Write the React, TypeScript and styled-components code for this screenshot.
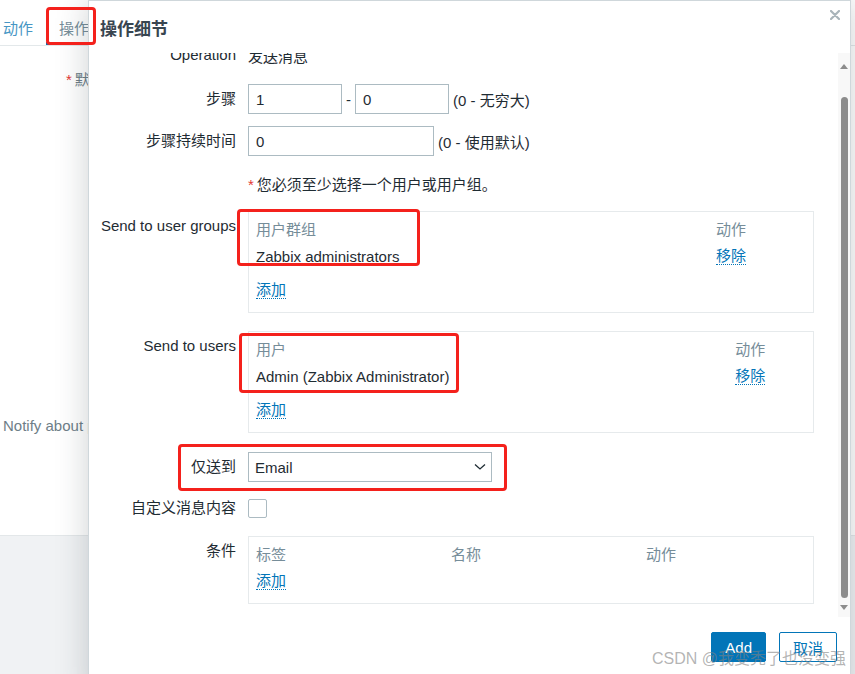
import React, { useLayoutEffect, useRef } from "react";
import styled, { createGlobalStyle } from "styled-components";

const colors = {
  text: "#1f2c33",
  muted: "#768d99",
  link: "#0275b8",
  inputBorder: "#acbbc2",
  boxBorder: "#e6eaec",
  required: "#e33734",
  annotate: "#f4211c",
};

const font = `"Liberation Sans", Arial, "Noto Sans CJK SC", sans-serif`;

const GlobalStyle = createGlobalStyle`
  html, body {
    margin: 0;
    padding: 0;
    background: #ffffff;
  }
  body {
    font-family: ${font};
    overflow: hidden;
  }
  * {
    box-sizing: border-box;
  }
`;

const Stage = styled.div`
  position: relative;
  width: 855px;
  height: 674px;
  overflow: hidden;
  background: #e9edef;
  font-family: ${font};
  font-size: 15px;
  color: ${colors.text};
`;

/* ---------- page behind the dialog ---------- */

const BackPage = styled.div`
  display: flex;
  flex-direction: column;
  height: 100%;
`;

const TabBar = styled.div`
  display: flex;
  height: 46px;
  margin-left: -10px;
  background: #ffffff;
  border-bottom: 1px solid #e3e8ea;
`;

const Tab = styled.div<{ $active?: boolean }>`
  display: flex;
  align-items: center;
  padding: 10px 13px 0;
  color: ${({ $active }) => ($active ? colors.muted : "#4796c4")};
  box-shadow: ${({ $active }) =>
    $active ? `inset 0 -3px 0 ${colors.link}` : "none"};
`;

const BackForm = styled.div`
  display: flex;
  flex-direction: column;
  height: 489px;
  background: #ffffff;
`;

const BackRow = styled.div<{ $mt: number; $indent: number }>`
  margin-top: ${({ $mt }) => $mt}px;
  padding-left: ${({ $indent }) => $indent}px;
  line-height: 30px;
  color: #6e7e88;
  white-space: nowrap;
`;

const Star = styled.span`
  color: ${colors.required};
  margin-right: 3px;
`;

const BackFooter = styled.div`
  flex: 1;
  background: #f0f2f4;
  border-top: 1px solid #e3e7e9;
`;

/* ---------- dialog ---------- */

const Dialog = styled.div`
  position: absolute;
  left: 88px;
  top: 0;
  width: 763px;
  height: 700px;
  display: flex;
  flex-direction: column;
  background: #ffffff;
  border: 1px solid #cfd7db;
  box-shadow: 0 0 30px rgba(31, 44, 51, 0.22);
`;

const DialogHeader = styled.div`
  display: flex;
  justify-content: space-between;
  align-items: center;
  height: 52px;
  padding: 0 10px 0 11px;
`;

const Title = styled.h4`
  margin: 0;
  font-size: 17px;
  font-weight: bold;
  color: #384550;
`;

const CloseButton = styled.button`
  align-self: flex-start;
  margin-top: 9px;
  padding: 0;
  width: 10px;
  height: 10px;
  border: none;
  background: none;
  display: flex;
`;

const DialogBody = styled.div`
  display: flex;
  height: 564px;
`;

const ScrollViewport = styled.div`
  flex: 1;
  overflow: hidden;
`;

const Scrollbar = styled.div`
  width: 12px;
  display: flex;
  flex-direction: column;
  align-items: center;
  background: #f8f8f8;
`;

const ArrowCell = styled.div<{ $h: number }>`
  height: ${({ $h }) => $h}px;
  display: flex;
  align-items: center;
  justify-content: center;
`;

const Arrow = styled.span<{ $down?: boolean }>`
  width: 0;
  height: 0;
  border-left: 4px solid transparent;
  border-right: 4px solid transparent;
  ${({ $down }) =>
    $down
      ? "border-top: 5px solid #8c8c8c;"
      : "border-bottom: 5px solid #8c8c8c;"}
`;

const ThumbTrack = styled.div`
  flex: 1;
  display: flex;
  padding-top: 18px;
`;

const Thumb = styled.div`
  width: 7px;
  border-radius: 4px;
  background: #8c8c8c;
`;

const Form = styled.div`
  display: flex;
  flex-direction: column;
  padding: 0 0 20px 11px;
`;

const Row = styled.div<{ $mt?: number }>`
  display: grid;
  grid-template-columns: 136px 566px;
  column-gap: 12px;
  margin-top: ${({ $mt }) => $mt ?? 0}px;
`;

const Label = styled.div`
  text-align: right;
  line-height: 30px;
  white-space: nowrap;
`;

const Field = styled.div`
  display: flex;
  align-items: center;
  gap: 4px;
  min-height: 30px;
  white-space: nowrap;
`;

const TextInput = styled.input<{ $w: number }>`
  width: ${({ $w }) => $w}px;
  height: 30px;
  padding: 0 7px;
  border: 1px solid ${colors.inputBorder};
  border-radius: 0;
  font-family: ${font};
  font-size: 15px;
  color: ${colors.text};
  outline: none;
`;

const Box = styled.div`
  border: 1px solid ${colors.boxBorder};
  padding: 4px 7px 10px;
`;

const Table = styled.table`
  width: 100%;
  border-collapse: collapse;
  th {
    height: 24px;
    padding: 0;
    text-align: left;
    font-weight: normal;
    color: ${colors.muted};
    white-space: nowrap;
  }
  td {
    height: 32px;
    padding: 0;
    white-space: nowrap;
  }
  th:first-child,
  td:first-child {
    padding-right: 10px;
  }
`;

const LinkButton = styled.a`
  display: inline-block;
  line-height: 17px;
  color: ${colors.link};
  text-decoration: none;
  border-bottom: 1px dotted ${colors.link};
  cursor: pointer;
`;

const AddRow = styled.div<{ $mt: number }>`
  display: flex;
  align-items: center;
  height: 24px;
  margin-top: ${({ $mt }) => $mt}px;
`;

const Select = styled.div`
  width: 244px;
  height: 30px;
  display: flex;
  align-items: center;
  justify-content: space-between;
  padding: 0 5px 0 6px;
  border: 1px solid ${colors.inputBorder};
`;

const Checkbox = styled.span`
  width: 19px;
  height: 19px;
  border: 1px solid ${colors.inputBorder};
  border-radius: 2px;
  background: #ffffff;
`;

const DialogFooter = styled.div`
  display: flex;
  justify-content: flex-end;
  gap: 13px;
  padding: 15px 13px 0 0;
`;

const Button = styled.button<{ $primary?: boolean }>`
  height: 30px;
  padding: 0 13px;
  border: 1px solid ${colors.link};
  border-radius: 2px;
  font-family: ${font};
  font-size: 15px;
  color: ${({ $primary }) => ($primary ? "#ffffff" : colors.link)};
  background: ${({ $primary }) => ($primary ? colors.link : "#ffffff")};
`;

/* ---------- overlays ---------- */

const Annotation = styled.div<{ $x: number; $y: number; $w: number; $h: number }>`
  position: absolute;
  left: ${({ $x }) => $x}px;
  top: ${({ $y }) => $y}px;
  width: ${({ $w }) => $w}px;
  height: ${({ $h }) => $h}px;
  border: 3px solid ${colors.annotate};
  border-radius: 4px;
  pointer-events: none;
`;

const Watermark = styled.div`
  position: absolute;
  left: 652px;
  top: 649px;
  font-size: 16px;
  line-height: 20px;
  color: rgba(130, 130, 130, 0.6);
  white-space: nowrap;
  pointer-events: none;
`;

const CloseIcon = () => (
  <svg width="10" height="10" viewBox="0 0 10 10">
    <path d="M1 1 L9 9 M9 1 L1 9" stroke="#a9b4ba" strokeWidth="2.2" strokeLinecap="round" />
  </svg>
);

const Chevron = () => (
  <svg width="12" height="8" viewBox="0 0 12 8">
    <path d="M1 1.5 L6 6 L11 1.5" fill="none" stroke={colors.text} strokeWidth="1.3" />
  </svg>
);

type Column = { title: string; width?: number };

const ListBox: React.FC<{ columns: Column[]; rows: string[][] }> = ({ columns, rows }) => (
  <Box>
    <Table>
      <thead>
        <tr>
          {columns.map((c) => (
            <th key={c.title} style={c.width ? { width: c.width } : undefined}>
              {c.title}
            </th>
          ))}
        </tr>
      </thead>
      {rows.length > 0 && (
        <tbody>
          {rows.map((r) => (
            <tr key={r[0]}>
              <td>{r[0]}</td>
              <td>
                <LinkButton>移除</LinkButton>
              </td>
            </tr>
          ))}
        </tbody>
      )}
    </Table>
    <AddRow $mt={rows.length > 0 ? 6 : 4}>
      <LinkButton>添加</LinkButton>
    </AddRow>
  </Box>
);

export default function App() {
  const scrollRef = useRef<HTMLDivElement>(null);

  useLayoutEffect(() => {
    if (scrollRef.current) scrollRef.current.scrollTop = 13;
  }, []);

  return (
    <Stage>
      <GlobalStyle />
      <BackPage>
        <TabBar>
          <Tab>动作</Tab>
          <Tab $active>操作</Tab>
        </TabBar>
        <BackForm>
          <BackRow $mt={19} $indent={66}>
            <Star>*</Star>默认操作步骤持续时间
          </BackRow>
          <BackRow $mt={316} $indent={3}>
            Notify about problems
          </BackRow>
        </BackForm>
        <BackFooter />
      </BackPage>

      <Dialog>
        <DialogHeader>
          <Title>操作细节</Title>
          <CloseButton aria-label="关闭">
            <CloseIcon />
          </CloseButton>
        </DialogHeader>

        <DialogBody>
          <ScrollViewport ref={scrollRef}>
            <Form>
              <Row>
                <Label>Operation</Label>
                <Field>发送消息</Field>
              </Row>
              <Row $mt={14}>
                <Label>步骤</Label>
                <Field>
                  <TextInput $w={94} defaultValue="1" />
                  <span>-</span>
                  <TextInput $w={94} defaultValue="0" />
                  <span>(0 - 无穷大)</span>
                </Field>
              </Row>
              <Row $mt={12}>
                <Label>步骤持续时间</Label>
                <Field>
                  <TextInput $w={186} defaultValue="0" />
                  <span>(0 - 使用默认)</span>
                </Field>
              </Row>
              <Row $mt={12}>
                <Label />
                <Field>
                  <span>
                    <Star>*</Star>您必须至少选择一个用户或用户组。
                  </span>
                </Field>
              </Row>
              <Row $mt={13}>
                <Label>Send to user groups</Label>
                <ListBox
                  columns={[{ title: "用户群组" }, { title: "动作" }]}
                  rows={[["Zabbix administrators"]]}
                />
              </Row>
              <Row $mt={18}>
                <Label>Send to users</Label>
                <ListBox
                  columns={[{ title: "用户" }, { title: "动作" }]}
                  rows={[["Admin (Zabbix Administrator)"]]}
                />
              </Row>
              <Row $mt={19}>
                <Label>仅送到</Label>
                <Field>
                  <Select>
                    <span>Email</span>
                    <Chevron />
                  </Select>
                </Field>
              </Row>
              <Row $mt={11}>
                <Label>自定义消息内容</Label>
                <Field>
                  <Checkbox />
                </Field>
              </Row>
              <Row $mt={13}>
                <Label>条件</Label>
                <ListBox
                  columns={[
                    { title: "标签", width: 195 },
                    { title: "名称", width: 195 },
                    { title: "动作" },
                  ]}
                  rows={[]}
                />
              </Row>
            </Form>
          </ScrollViewport>
          <Scrollbar>
            <ArrowCell $h={26}>
              <Arrow />
            </ArrowCell>
            <ThumbTrack>
              <Thumb />
            </ThumbTrack>
            <ArrowCell $h={19}>
              <Arrow $down />
            </ArrowCell>
          </Scrollbar>
        </DialogBody>

        <DialogFooter>
          <Button $primary>Add</Button>
          <Button>取消</Button>
        </DialogFooter>
      </Dialog>

      <Annotation $x={46} $y={7} $w={50} $h={38} />
      <Annotation $x={237} $y={209} $w={183} $h={57} />
      <Annotation $x={239} $y={333} $w={220} $h={60} />
      <Annotation $x={178} $y={444} $w={329} $h={47} />

      <Watermark>CSDN @我变秃了也没变强</Watermark>
    </Stage>
  );
}
